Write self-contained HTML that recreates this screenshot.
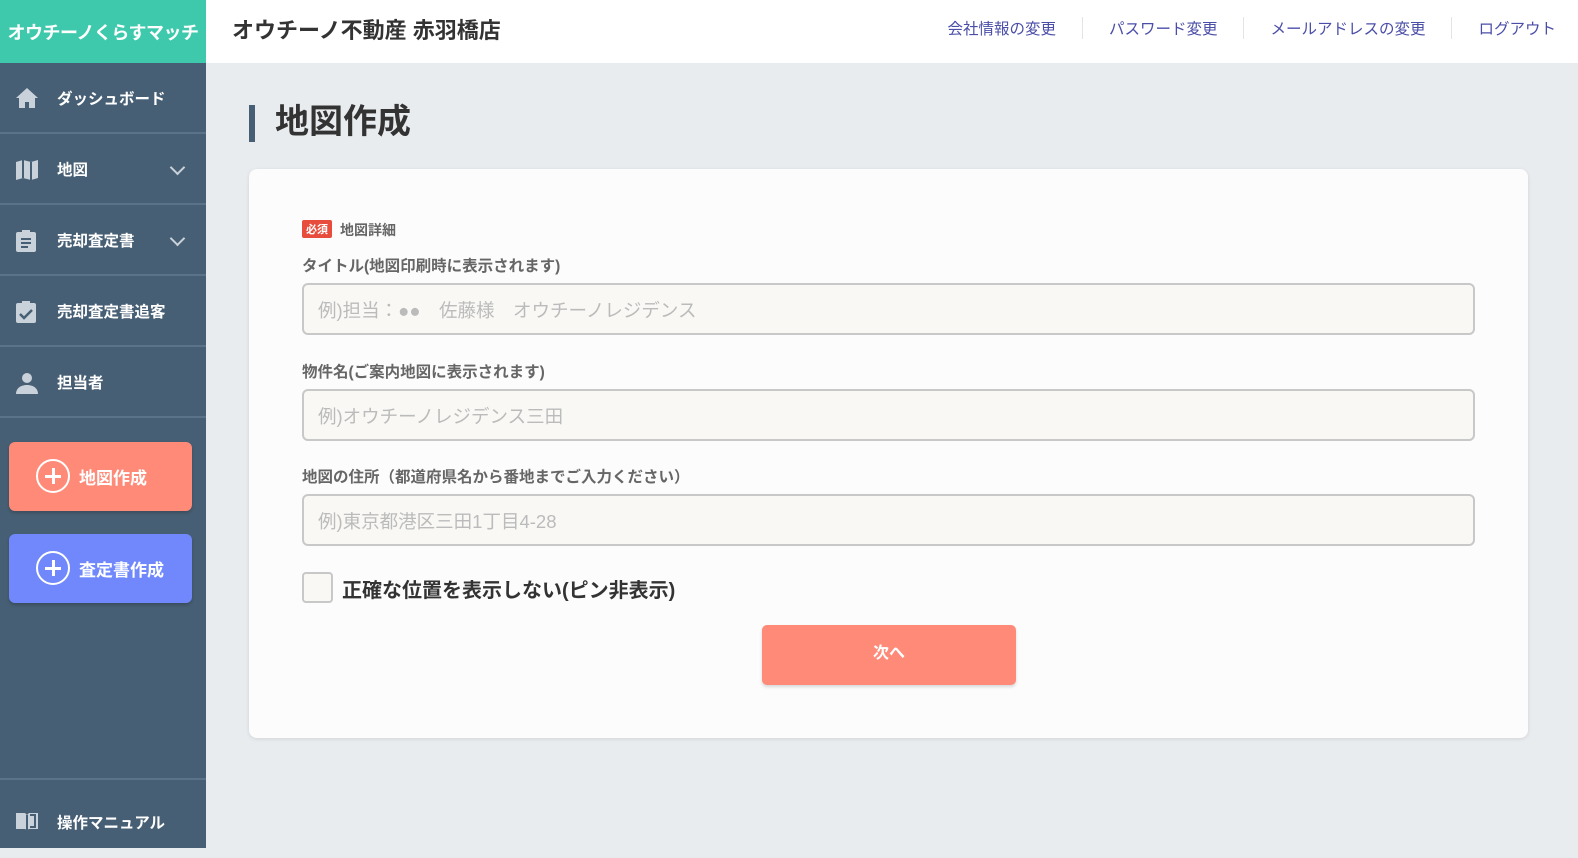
<!DOCTYPE html>
<html><head><meta charset="utf-8"><style>
*{box-sizing:border-box;margin:0;padding:0}
body{width:1578px;height:848px;overflow:hidden;background:#e9ecef;font-family:"Liberation Sans","Noto Sans CJK JP",sans-serif;position:relative}
.logo{position:absolute;left:0;top:0;width:206px;height:63px;background:#3ec9ad;color:#fff;font-weight:bold;font-size:18px;display:flex;align-items:center;justify-content:center;letter-spacing:-0.5px;white-space:nowrap}
.hdr{position:absolute;left:206px;top:0;right:0;height:63px;background:#fff}
.shop{position:absolute;left:26px;top:13px;font-size:22px;font-weight:bold;color:#333}
.nav{position:absolute;right:22px;top:17px;font-size:15.5px;color:#4b4ea8;display:flex}
.nav span{padding:0 26px;border-left:1px solid #e4e4e4}
.nav span:first-child{border-left:none}
.nav span:last-child{padding-right:0}
.side{position:absolute;left:0;top:63px;width:206px;bottom:0;background:#475f74}
.it{position:absolute;left:0;width:206px;height:71px;border-bottom:2px solid #5a7388;color:#fff;font-weight:bold;font-size:15.5px}
.it .t{position:absolute;left:57px;top:24px}
.it svg{position:absolute;left:15px;top:24px}
.chev{position:absolute;left:172px;top:28px;width:11px;height:11px;border-right:2px solid #c9d2da;border-bottom:2px solid #c9d2da;transform:rotate(45deg)}
.btn{position:absolute;left:9px;width:183px;height:69px;border-radius:6px;color:#fff;font-weight:bold;font-size:17px;box-shadow:0 2px 3px rgba(0,0,0,.2)}
.btn .c{position:absolute;left:27px;top:17px;width:34px;height:34px;border:2px solid #fff;border-radius:50%}
.btn .c:before{content:"";position:absolute;left:7px;top:14px;width:16px;height:3px;background:#fff}
.btn .c:after{content:"";position:absolute;left:14px;top:7px;width:3px;height:16px;background:#fff}
.btn .t{position:absolute;left:70px;top:22px}
.title{position:absolute;left:249px;top:105px;border-left:6px solid #475f74;height:37px;padding-left:20px;font-size:34px;font-weight:bold;color:#333;line-height:34px}
.card{position:absolute;left:249px;top:169px;width:1279px;height:569px;background:#fcfcfc;border-radius:8px;box-shadow:0 1px 4px rgba(0,0,0,.1)}
.lab{position:absolute;left:302px;font-size:15.5px;font-weight:bold;color:#666}
.inp{position:absolute;left:302px;width:1173px;height:52px;border:2px solid #c8c8c8;border-radius:6px;background:#f9f8f5;color:#bbb;font-size:18.5px;padding:12px 14px}
.req{display:inline-block;background:#e74c3c;color:#fff;font-size:11px;padding:1px 4px;margin-right:8px;border-radius:2px;vertical-align:2px}
</style></head><body>
<div class="logo">オウチーノくらすマッチ</div>
<div class="hdr"><div class="shop">オウチーノ不動産 赤羽橋店</div>
<div class="nav"><span>会社情報の変更</span><span>パスワード変更</span><span>メールアドレスの変更</span><span>ログアウト</span></div></div>
<div class="side">
<div class="it" style="top:0"><svg width="24" height="22" viewBox="0 0 24 22"><path d="M12 1L1 11h3v10h6v-6h4v6h6V11h3z" fill="#c9d2da"/></svg><span class="t">ダッシュボード</span></div>
<div class="it" style="top:71px"><svg width="24" height="24" viewBox="0 0 24 24"><path d="M1 4l7-2 8 2 7-2v18l-7 2-8-2-7 2z" fill="#c9d2da"/><path d="M8 2v18M16 4v18" stroke="#475f74" stroke-width="2"/></svg><span class="t">地図</span><div class="chev"></div></div>
<div class="it" style="top:142px"><svg width="22" height="24" viewBox="0 0 22 24"><rect x="1" y="3" width="20" height="20" rx="2" fill="#c9d2da"/><rect x="7" y="1" width="8" height="5" fill="#c9d2da"/><path d="M6 10h10M6 14h10M6 18h7" stroke="#475f74" stroke-width="2"/></svg><span class="t">売却査定書</span><div class="chev"></div></div>
<div class="it" style="top:213px"><svg width="22" height="24" viewBox="0 0 22 24"><rect x="1" y="3" width="20" height="20" rx="2" fill="#c9d2da"/><rect x="7" y="1" width="8" height="5" fill="#c9d2da"/><path d="M5 14l4 4 8-8" stroke="#475f74" stroke-width="2.5" fill="none"/></svg><span class="t">売却査定書追客</span></div>
<div class="it" style="top:284px"><svg width="24" height="24" viewBox="0 0 24 24"><circle cx="12" cy="7" r="5" fill="#c9d2da"/><path d="M1 23c0-6 5-9 11-9s11 3 11 9z" fill="#c9d2da"/></svg><span class="t">担当者</span></div>
<div class="btn" style="top:379px;background:#ff8a78"><div class="c"></div><span class="t">地図作成</span></div>
<div class="btn" style="top:471px;background:#7088fb"><div class="c"></div><span class="t">査定書作成</span></div>
<div style="position:absolute;left:0;top:715px;width:206px;height:2px;background:#5a7388"></div>
<div class="it" style="top:724px;border:none"><svg width="24" height="20" viewBox="0 0 24 20"><path d="M1 2h9l2 2 2-2h9v16h-9l-2 1-2-1H1z" fill="#c9d2da"/><path d="M12 4v15M15 4h5v12h-5" stroke="#475f74" stroke-width="2" fill="none"/></svg><span class="t">操作マニュアル</span></div>
</div>
<div class="title">地図作成</div>
<div class="card"></div>
<div class="lab" style="top:220px;font-size:14px"><span class="req">必須</span>地図詳細</div>
<div class="lab" style="top:254px">タイトル(地図印刷時に表示されます)</div>
<div class="inp" style="top:283px">例)担当：●●　佐藤様　オウチーノレジデンス</div>
<div class="lab" style="top:360px">物件名(ご案内地図に表示されます)</div>
<div class="inp" style="top:389px">例)オウチーノレジデンス三田</div>
<div class="lab" style="top:465px">地図の住所（都道府県名から番地までご入力ください）</div>
<div class="inp" style="top:494px">例)東京都港区三田1丁目4-28</div>
<div style="position:absolute;left:302px;top:572px;width:31px;height:31px;border:2px solid #c8c8c8;border-radius:4px;background:#f9f8f5"></div>
<div style="position:absolute;left:342px;top:574px;font-size:20px;font-weight:bold;color:#333">正確な位置を表示しない(ピン非表示)</div>
<div style="position:absolute;left:762px;top:625px;width:254px;height:60px;background:#ff8a78;border-radius:5px;color:#fff;font-weight:bold;font-size:16px;text-align:center;line-height:58px;box-shadow:0 2px 3px rgba(0,0,0,.15)">次へ</div>
</body></html>
